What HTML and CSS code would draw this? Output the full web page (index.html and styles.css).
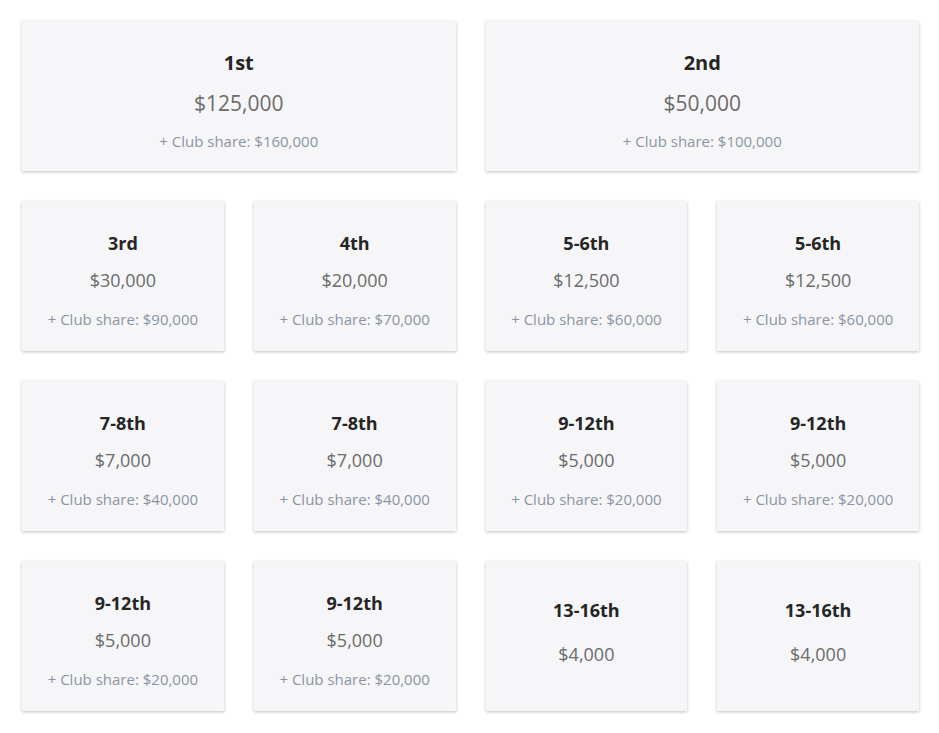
FILE: index.html
```html
<!DOCTYPE html>
<html>
<head>
<meta charset="utf-8">
<link rel="stylesheet" href="styles.css">
</head>
<body>
<div class="grid">
  <div class="card big"><div class="place">1st</div><div class="prize">$125,000</div><div class="club">+ Club share: $160,000</div></div>
  <div class="card big"><div class="place">2nd</div><div class="prize">$50,000</div><div class="club">+ Club share: $100,000</div></div>

  <div class="card"><div class="place">3rd</div><div class="prize">$30,000</div><div class="club">+ Club share: $90,000</div></div>
  <div class="card"><div class="place">4th</div><div class="prize">$20,000</div><div class="club">+ Club share: $70,000</div></div>
  <div class="card"><div class="place">5-6th</div><div class="prize">$12,500</div><div class="club">+ Club share: $60,000</div></div>
  <div class="card"><div class="place">5-6th</div><div class="prize">$12,500</div><div class="club">+ Club share: $60,000</div></div>

  <div class="card"><div class="place">7-8th</div><div class="prize">$7,000</div><div class="club">+ Club share: $40,000</div></div>
  <div class="card"><div class="place">7-8th</div><div class="prize">$7,000</div><div class="club">+ Club share: $40,000</div></div>
  <div class="card"><div class="place">9-12th</div><div class="prize">$5,000</div><div class="club">+ Club share: $20,000</div></div>
  <div class="card"><div class="place">9-12th</div><div class="prize">$5,000</div><div class="club">+ Club share: $20,000</div></div>

  <div class="card"><div class="place">9-12th</div><div class="prize">$5,000</div><div class="club">+ Club share: $20,000</div></div>
  <div class="card"><div class="place">9-12th</div><div class="prize">$5,000</div><div class="club">+ Club share: $20,000</div></div>
  <div class="card noclub"><div class="place">13-16th</div><div class="prize">$4,000</div></div>
  <div class="card noclub"><div class="place">13-16th</div><div class="prize">$4,000</div></div>
</div>
</body>
</html>
```
FILE: styles.css
```css
html, body {
  margin: 0;
  padding: 0;
  background: #ffffff;
}
body {
  font-family: "Open Sans", "Liberation Sans", sans-serif;
}
.grid {
  display: grid;
  grid-template-columns: repeat(4, 1fr);
  grid-auto-rows: 150px;
  gap: 30px;
  padding: 21px 20px 20px 22px;
}
.card {
  background: #f6f6f8;
  box-shadow: 0 1px 3px rgba(0, 0, 0, 0.25);
  display: flex;
  flex-direction: column;
  align-items: center;
  padding-top: 29px;
  box-sizing: border-box;
  text-align: center;
}
.card.big {
  grid-column: span 2;
  padding-top: 28px;
}
.place {
  font-weight: 700;
  font-size: 18px;
  line-height: 26px;
  color: #252525;
}
.big .place {
  font-size: 20px;
  line-height: 28px;
}
.prize {
  font-size: 18px;
  line-height: 26px;
  color: #6b6b6b;
  margin-top: 11px;
}
.big .prize {
  font-size: 21px;
  line-height: 28px;
  margin-top: 12px;
}
.club {
  font-size: 15px;
  line-height: 20px;
  color: #8b94a3;
  margin-top: 16px;
}
.big .club {
  margin-top: 14px;
}
.noclub {
  padding-top: 36px;
}
.noclub .prize {
  margin-top: 18px;
}
```
